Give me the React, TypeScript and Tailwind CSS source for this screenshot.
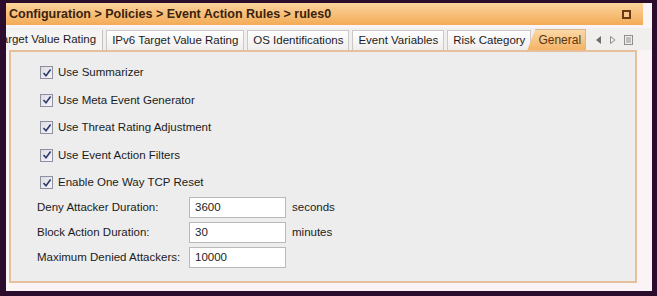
import React from "react";

const FONT = { fontFamily: '"Liberation Sans", Arial, sans-serif' };

const checks = [
  "Use Summarizer",
  "Use Meta Event Generator",
  "Use Threat Rating Adjustment",
  "Use Event Action Filters",
  "Enable One Way TCP Reset",
];

const fields = [
  { label: "Deny Attacker Duration:", value: "3600", unit: "seconds" },
  { label: "Block Action Duration:", value: "30", unit: "minutes" },
  { label: "Maximum Denied Attackers:", value: "10000", unit: "" },
];

const tabs = ["IPv6 Target Value Rating", "OS Identifications", "Event Variables", "Risk Category"];

function Check() {
  return (
    <span className="flex h-[13px] w-[13px] shrink-0 items-center justify-center border border-[#8e8f9f] bg-gradient-to-br from-[#dcdde3] to-[#f6f6f8]">
      <svg width="10" height="10" viewBox="0 0 10 10">
        <path d="M1.5 5 L4 7.8 L8.6 1.6" fill="none" stroke="#2c3a6a" strokeWidth="1.6" />
      </svg>
    </span>
  );
}

export default function App() {
  return (
    <div className="h-[296px] w-[657px] bg-[#2b0c2d] pb-[5px] pl-[6px] pr-[5px] pt-[3px]" style={FONT}>
      <div className="flex h-full flex-col bg-[#fbf4f6]">
        {/* title bar */}
        <div className="mr-[9px] flex h-[22px] shrink-0 items-center justify-between bg-gradient-to-b from-[#fbd49c] to-[#f3ab55] pl-[3px] pr-[12px]">
          <span className="whitespace-nowrap text-[12.5px] font-bold text-[#3b220e]">
            Configuration &gt; Policies &gt; Event Action Rules &gt; rules0
          </span>
          <span className="h-[9px] w-[9px] border-2 border-[#6b3a17] bg-[#f8c98c]" />
        </div>

        {/* tab strip */}
        <div className="mt-[3px] flex h-[22px] shrink-0 items-end overflow-hidden whitespace-nowrap bg-[#f1eeee] pl-[3px] text-[11.5px] text-[#1c1c1c]">
          <div className="flex h-[20px] shrink-0 items-center border-r border-[#c8c3c3] bg-[#f6f3f3] pr-[6px]">
            <span className="-ml-[13px]">Target Value Rating</span>
          </div>
          {tabs.map((t) => (
            <div
              key={t}
              className="ml-[3px] flex h-[20px] shrink-0 items-center border-x border-t border-[#cdc8c8] bg-gradient-to-b from-[#ffffff] to-[#f0eded] px-[5px]"
            >
              {t}
            </div>
          ))}
          <div className="-ml-[4px] flex h-[21px] shrink-0 items-center border-r border-t border-[#d9b588] bg-gradient-to-b from-[#fbd8a6] to-[#f4b264] pl-[11px] pr-[4px] text-[12px] text-[#5a3410] [clip-path:polygon(8px_0,100%_0,100%_100%,0_100%)]">
            General
          </div>
          <div className="flex h-[20px] shrink-0 items-center gap-[8px] pl-[10px]">
            <svg width="6" height="8" viewBox="0 0 6 8">
              <path d="M5 0 L0 4 L5 8 Z" fill="#6d6d6d" />
            </svg>
            <svg width="6" height="8" viewBox="0 0 6 8">
              <path d="M0.5 0.5 L5 4 L0.5 7.5 Z" fill="none" stroke="#8d8d8d" />
            </svg>
            <svg width="9" height="10" viewBox="0 0 9 10">
              <rect x="0.5" y="0.5" width="8" height="9" fill="none" stroke="#8d8d8d" />
              <path d="M2 3 H7 M2 5 H7 M2 7 H7" stroke="#8d8d8d" />
            </svg>
          </div>
        </div>

        {/* panel */}
        <div className="flex min-h-0 flex-1 pb-[8px] pl-[3px] pr-[15px]">
          <div className="flex-1 border-[2px] border-[#e6c09a] bg-[#ededed] pl-[29px] pt-[14px]">
            <div className="flex flex-col gap-[14.5px] text-[11.5px] leading-[13px] text-[#1c1c1c]">
              {checks.map((c) => (
                <label key={c} className="flex items-center gap-[5px]">
                  <Check />
                  <span>{c}</span>
                </label>
              ))}
            </div>
            <div className="-ml-[3px] mt-[8px] flex flex-col gap-[4px] text-[11.5px] text-[#1c1c1c]">
              {fields.map((f) => (
                <div key={f.label} className="flex items-center">
                  <span className="w-[152px]">{f.label}</span>
                  <span className="flex h-[21px] w-[97px] items-center border border-[#b9b9b9] bg-white pl-[5px]">
                    {f.value}
                  </span>
                  <span className="ml-[6px]">{f.unit}</span>
                </div>
              ))}
            </div>
          </div>
        </div>
      </div>
    </div>
  );
}
